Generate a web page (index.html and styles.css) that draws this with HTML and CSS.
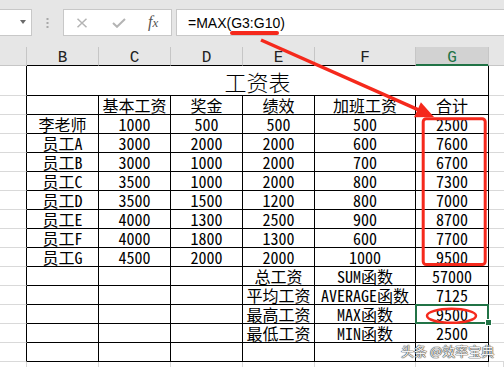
FILE: index.html
```html
<!DOCTYPE html>
<html lang="zh-CN">
<head>
<meta charset="utf-8">
<title>工资表</title>
<link rel="stylesheet" href="styles.css">
</head>
<body>
<div class="app">
  <div class="toolbar">
    <div class="namebox"><span class="dd"></span></div>
    <div class="grip">
      <svg width="3" height="10" viewBox="0 0 3 10"><rect x="0.5" y="0" width="2" height="2" fill="#a8a8a8"/><rect x="0.5" y="4" width="2" height="2" fill="#a8a8a8"/><rect x="0.5" y="8" width="2" height="2" fill="#a8a8a8"/></svg>
    </div>
    <div class="fxbox">
      <svg class="ic-x" width="12" height="10" viewBox="0 0 12 10"><path d="M1.5 0.8 L10.5 9.2 M10.5 0.8 L1.5 9.2" stroke="#b4b4b4" stroke-width="1.5" fill="none"/></svg>
      <svg class="ic-ok" width="14" height="10" viewBox="0 0 14 10"><path d="M1 5 L5 8.8 L13 1" stroke="#b4b4b4" stroke-width="2" fill="none"/></svg>
      <span class="fx">f<span class="fx-x">x</span></span>
    </div>
    <div class="formula">=MAX(G3:G10)</div>
  </div>

  <table class="sheet">
    <colgroup>
      <col class="w-a"><col class="w-b"><col class="w-c"><col class="w-d"><col class="w-e"><col class="w-f"><col class="w-g"><col class="w-h">
    </colgroup>
    <thead>
      <tr class="hdr">
        <th class="side"></th><th>B</th><th>C</th><th>D</th><th>E</th><th>F</th><th class="active">G</th><th class="side"></th>
      </tr>
    </thead>
    <tbody>
      <tr class="title"><td class="edge"></td><td class="c ttl" colspan="6">工资表</td><td class="out"></td></tr>
      <tr><td class="edge"></td><td class="c"></td><td class="c">基本工资</td><td class="c">奖金</td><td class="c">绩效</td><td class="c">加班工资</td><td class="c">合计</td><td class="out"></td></tr>
      <tr><td class="edge"></td><td class="c">李老师</td><td class="c">1000</td><td class="c">500</td><td class="c">500</td><td class="c">500</td><td class="c">2500</td><td class="out"></td></tr>
      <tr><td class="edge"></td><td class="c">员工A</td><td class="c">3000</td><td class="c">2000</td><td class="c">2000</td><td class="c">600</td><td class="c">7600</td><td class="out"></td></tr>
      <tr><td class="edge"></td><td class="c">员工B</td><td class="c">3000</td><td class="c">1000</td><td class="c">2000</td><td class="c">700</td><td class="c">6700</td><td class="out"></td></tr>
      <tr><td class="edge"></td><td class="c">员工C</td><td class="c">3500</td><td class="c">1000</td><td class="c">2000</td><td class="c">800</td><td class="c">7300</td><td class="out"></td></tr>
      <tr><td class="edge"></td><td class="c">员工D</td><td class="c">3500</td><td class="c">1500</td><td class="c">1200</td><td class="c">800</td><td class="c">7000</td><td class="out"></td></tr>
      <tr><td class="edge"></td><td class="c">员工E</td><td class="c">4000</td><td class="c">1300</td><td class="c">2500</td><td class="c">900</td><td class="c">8700</td><td class="out"></td></tr>
      <tr><td class="edge"></td><td class="c">员工F</td><td class="c">4000</td><td class="c">1800</td><td class="c">1300</td><td class="c">600</td><td class="c">7700</td><td class="out"></td></tr>
      <tr><td class="edge"></td><td class="c">员工G</td><td class="c">4500</td><td class="c">2000</td><td class="c">2000</td><td class="c">1000</td><td class="c">9500</td><td class="out"></td></tr>
      <tr><td class="edge"></td><td class="c"></td><td class="c"></td><td class="c"></td><td class="c">总工资</td><td class="c">SUM函数</td><td class="c">57000</td><td class="out"></td></tr>
      <tr><td class="edge"></td><td class="c"></td><td class="c"></td><td class="c"></td><td class="c">平均工资</td><td class="c">AVERAGE函数</td><td class="c">7125</td><td class="out"></td></tr>
      <tr><td class="edge"></td><td class="c"></td><td class="c"></td><td class="c"></td><td class="c">最高工资</td><td class="c">MAX函数</td><td class="c sel">9500</td><td class="out"></td></tr>
      <tr><td class="edge"></td><td class="c"></td><td class="c"></td><td class="c"></td><td class="c">最低工资</td><td class="c">MIN函数</td><td class="c">2500</td><td class="out"></td></tr>
      <tr><td class="edge"></td><td class="c"></td><td class="c"></td><td class="c"></td><td class="c"></td><td class="c"></td><td class="c"></td><td class="out"></td></tr>
      <tr class="tail"><td></td><td></td><td></td><td></td><td></td><td></td><td></td><td></td></tr>
    </tbody>
  </table>

  <svg class="marks" width="504" height="367" viewBox="0 0 504 367">
    <line x1="232" y1="33" x2="277" y2="33" stroke="#f5291c" stroke-width="4" stroke-linecap="round"/>
    <line x1="261" y1="40" x2="418.5" y2="109.8" stroke="#f5291c" stroke-width="3.5"/>
    <polygon points="434,117 420.9,102.2 414.1,117.2" fill="#f5291c"/>
    <rect x="423.2" y="118.8" width="62" height="145.7" rx="3" fill="none" stroke="#f5291c" stroke-width="3"/>
    <ellipse cx="451.5" cy="315.8" rx="24.5" ry="7" fill="none" stroke="#f5291c" stroke-width="2.5"/>
  </svg>

  <div class="wm">头条 @效率宝典</div>
</div>
</body>
</html>
```

FILE: styles.css
```css
body {
  margin: 0;
  background: #fff;
}

.app {
  position: relative;
  width: 504px;
  height: 367px;
  overflow: hidden;
  background: #fff;
}

/* ---------- formula toolbar ---------- */
.toolbar {
  display: flex;
  align-items: flex-start;
  height: 47px;
  box-sizing: border-box;
  padding-top: 9px;
  background: #e6e6e6;
}

.namebox {
  margin-left: -1px;
  width: 33px;
  height: 27px;
  box-sizing: border-box;
  background: #fff;
  border: 1px solid #c8c8c8;
  display: flex;
  align-items: center;
  justify-content: flex-end;
  padding-right: 5px;
}

.dd {
  width: 0;
  height: 0;
  margin-top: -2px;
  border-left: 3.5px solid transparent;
  border-right: 3.5px solid transparent;
  border-top: 4px solid #6a6a6a;
}

.grip {
  width: 31px;
  height: 27px;
  display: flex;
  align-items: center;
  justify-content: center;
}

.fxbox {
  width: 109px;
  height: 27px;
  box-sizing: border-box;
  background: #fff;
  border: 1px solid #c8c8c8;
  display: flex;
  align-items: center;
}

.ic-x {
  margin-left: 12px;
}

.ic-ok {
  margin-left: 24px;
}

.fx {
  margin-left: 22px;
  font-family: "Liberation Serif", serif;
  font-style: italic;
  font-size: 16px;
  line-height: 16px;
  color: #555;
}

.fx-x {
  font-size: 13px;
}

.formula {
  flex: 1;
  margin-left: 4px;
  margin-right: -2px;
  height: 27px;
  box-sizing: border-box;
  background: #fff;
  border: 1px solid #c8c8c8;
  padding: 1px 0 0 11px;
  font-family: "Liberation Sans", Arial, sans-serif;
  font-size: 14px;
  line-height: 24px;
  color: #000;
}

/* ---------- sheet ---------- */
.sheet {
  border-collapse: separate;
  border-spacing: 0;
  table-layout: fixed;
  width: 504px;
}

.w-a { width: 27px; }
.w-b { width: 72px; }
.w-c { width: 72px; }
.w-d { width: 72px; }
.w-e { width: 72px; }
.w-f { width: 101px; }
.w-g { width: 73px; }
.w-h { width: 15px; }

.hdr {
  height: 19px;
}

.hdr th {
  padding: 5px 0 0;
  line-height: 13px;
  font-family: "Liberation Mono", monospace;
  font-size: 16px;
  font-weight: normal;
  color: #222;
  background: #e6e6e6;
  border-right: 1px solid #c6c6c6;
  border-bottom: 1px solid #000;
  vertical-align: top;
  text-align: center;
}

.hdr th.side {
  border-bottom-color: #c6c6c6;
}

.hdr th:last-child {
  border-right: none;
}

.hdr th.active {
  background: #d2d2d2;
  color: #217346;
  border-bottom-color: #217346;
  box-shadow: inset 0 -1px 0 #217346;
}

tbody tr {
  height: 19px;
}

tbody tr.title {
  height: 30px;
}

td {
  padding: 1px 0 0;
  line-height: 17px;
  font-family: "Noto Sans Mono CJK SC", "Noto Sans CJK SC", monospace;
  font-size: 16px;
  color: #000;
  text-align: center;
  vertical-align: top;
  white-space: nowrap;
  overflow: visible;
}

td.edge {
  border-right: 1px solid #000;
  border-bottom: 1px solid #d9d9d9;
}

td.c {
  border-right: 1px solid #000;
  border-bottom: 1px solid #000;
}

td.out {
  border-bottom: 1px solid #d9d9d9;
}

tr.tail td {
  border-right: 1px solid #d9d9d9;
  border-bottom: 1px solid #d9d9d9;
}

td.ttl {
  padding-top: 4px;
  font-family: "Noto Sans CJK SC", sans-serif;
  font-weight: 300;
  font-size: 22px;
  line-height: 22px;
}

td.sel {
  position: relative;
}

td.sel::before {
  content: "";
  position: absolute;
  inset: -1px;
  border: 2px solid #217346;
}

td.sel::after {
  content: "";
  position: absolute;
  right: -4px;
  bottom: -3px;
  width: 5px;
  height: 5px;
  background: #217346;
  border: 1px solid #fff;
}

/* ---------- annotations ---------- */
.marks {
  position: absolute;
  left: 0;
  top: 0;
  pointer-events: none;
}

.wm {
  position: absolute;
  left: 401px;
  top: 343px;
  font-family: "Noto Sans CJK SC", sans-serif;
  font-size: 13px;
  line-height: 16px;
  color: #f2f2f2;
  text-shadow: 0 0 1px #3a3a3a, 0 0 1px #3a3a3a, 0 0 1px #3a3a3a;
  white-space: nowrap;
}
```
